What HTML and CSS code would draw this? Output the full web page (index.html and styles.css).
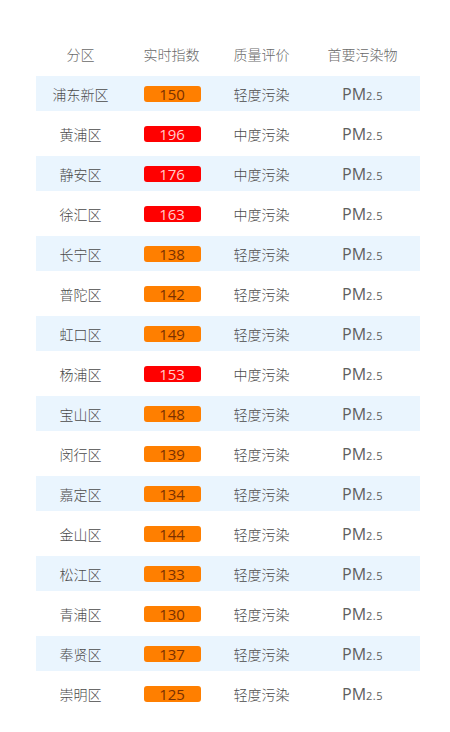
FILE: index.html
```html
<!DOCTYPE html>
<html lang="zh-CN">
<head>
<meta charset="utf-8">
<link rel="stylesheet" href="styles.css">
</head>
<body>
<div class="table">
  <div class="row head"><div>分区</div><div>实时指数</div><div>质量评价</div><div>首要污染物</div></div>
  <div class="row alt"><div>浦东新区</div><div><span class="badge orange">150</span></div><div>轻度污染</div><div class="pm">PM<small>2.5</small></div></div>
  <div class="row"><div>黄浦区</div><div><span class="badge red">196</span></div><div>中度污染</div><div class="pm">PM<small>2.5</small></div></div>
  <div class="row alt"><div>静安区</div><div><span class="badge red">176</span></div><div>中度污染</div><div class="pm">PM<small>2.5</small></div></div>
  <div class="row"><div>徐汇区</div><div><span class="badge red">163</span></div><div>中度污染</div><div class="pm">PM<small>2.5</small></div></div>
  <div class="row alt"><div>长宁区</div><div><span class="badge orange">138</span></div><div>轻度污染</div><div class="pm">PM<small>2.5</small></div></div>
  <div class="row"><div>普陀区</div><div><span class="badge orange">142</span></div><div>轻度污染</div><div class="pm">PM<small>2.5</small></div></div>
  <div class="row alt"><div>虹口区</div><div><span class="badge orange">149</span></div><div>轻度污染</div><div class="pm">PM<small>2.5</small></div></div>
  <div class="row"><div>杨浦区</div><div><span class="badge red">153</span></div><div>中度污染</div><div class="pm">PM<small>2.5</small></div></div>
  <div class="row alt"><div>宝山区</div><div><span class="badge orange">148</span></div><div>轻度污染</div><div class="pm">PM<small>2.5</small></div></div>
  <div class="row"><div>闵行区</div><div><span class="badge orange">139</span></div><div>轻度污染</div><div class="pm">PM<small>2.5</small></div></div>
  <div class="row alt"><div>嘉定区</div><div><span class="badge orange">134</span></div><div>轻度污染</div><div class="pm">PM<small>2.5</small></div></div>
  <div class="row"><div>金山区</div><div><span class="badge orange">144</span></div><div>轻度污染</div><div class="pm">PM<small>2.5</small></div></div>
  <div class="row alt"><div>松江区</div><div><span class="badge orange">133</span></div><div>轻度污染</div><div class="pm">PM<small>2.5</small></div></div>
  <div class="row"><div>青浦区</div><div><span class="badge orange">130</span></div><div>轻度污染</div><div class="pm">PM<small>2.5</small></div></div>
  <div class="row alt"><div>奉贤区</div><div><span class="badge orange">137</span></div><div>轻度污染</div><div class="pm">PM<small>2.5</small></div></div>
  <div class="row"><div>崇明区</div><div><span class="badge orange">125</span></div><div>轻度污染</div><div class="pm">PM<small>2.5</small></div></div>
</div>
</body>
</html>
```
FILE: styles.css
```css
html, body {
  margin: 0;
  padding: 0;
  background: #fff;
}
body {
  font-family: "Noto Sans CJK SC", "Noto Sans", sans-serif;
  font-size: 14px;
  font-weight: 300;
  color: #4a4a4a;
}
.table {
  width: 384px;
  margin: 36px 0 0 36px;
  display: flex;
  flex-direction: column;
  gap: 5px;
}
.row {
  display: grid;
  grid-template-columns: 89px 93px 87px 115px;
  height: 35px;
  align-items: center;
  text-align: center;
  line-height: 20px;
}
.row.head {
  color: #6a6a6a;
}
.row.alt {
  background: #eaf5fe;
}
.badge {
  display: block;
  width: 57px;
  height: 16px;
  margin: 0 auto;
  border-radius: 3px;
  font-family: "Open Sans", "Noto Sans", sans-serif;
  font-size: 15px;
  font-weight: 400;
  line-height: 16px;
  position: relative;
  left: 0.5px;
}
.badge.orange {
  background: #ff7f00;
  color: #7a3000;
}
.badge.red {
  background: #ff0000;
  color: #ffcccc;
}
.pm {
  font-family: "Open Sans", "Noto Sans", sans-serif;
  font-size: 16px;
  font-weight: 400;
  color: #5e5e5e;
  padding-top: 3px;
}
.pm small {
  font-size: 11px;
  font-weight: 400;
  letter-spacing: 0.5px;
}
```
